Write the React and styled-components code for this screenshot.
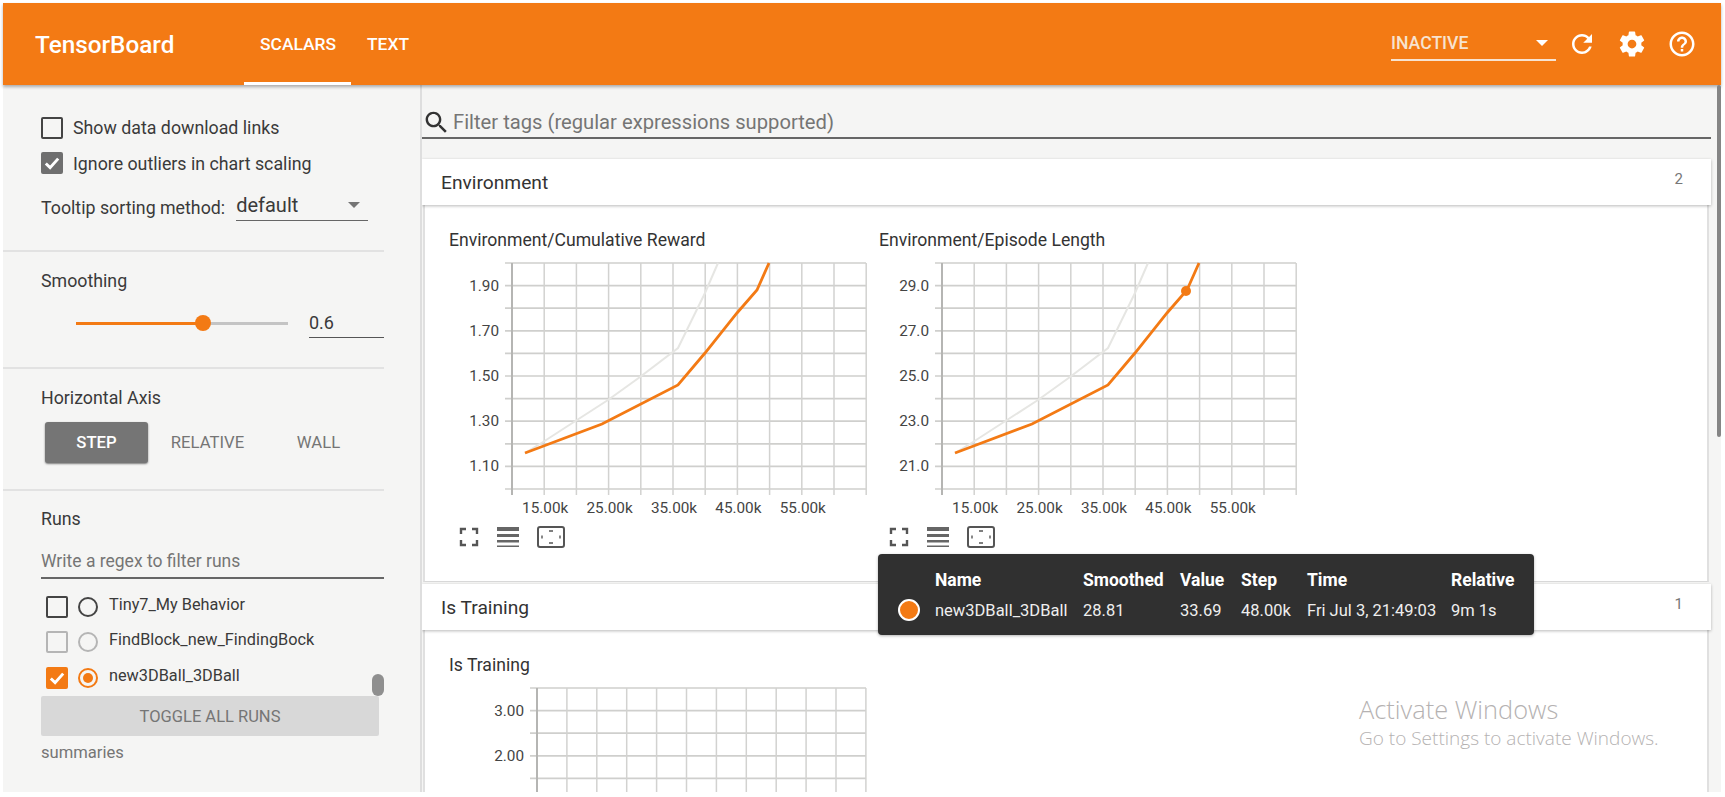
import styled, { createGlobalStyle } from 'styled-components';

const ORANGE = '#f37a14';

const GlobalStyle = createGlobalStyle`
html, body {
  margin: 0;
  padding: 0;
  background: #fff;
}
* {
  box-sizing: border-box;
}
`;

const Page = styled.div`
position: relative;
width: 1725px;
height: 797px;
padding: 3px 4px 5px 3px;
display: flex;
flex-direction: column;
overflow: hidden;
background: #fff;
font-family: Roboto, "Liberation Sans", sans-serif;
font-size: 17.8px;
color: #3a3a3a;
`;

const Header = styled.header`
position: relative;
z-index: 2;
flex: none;
height: 82px;
display: flex;
align-items: center;
background: ${ORANGE};
color: #fff;
box-shadow: 0 2px 3px rgba(0, 0, 0, 0.3);
`;

const Brand = styled.div`
width: 241px;
padding-left: 32px;
font-size: 24.3px;
font-weight: 500;
`;

const Tab = styled.div`
height: 100%;
padding: 3px 15px 0 16px;
display: flex;
align-items: center;
font-size: 17.4px;
font-weight: 500;
border-bottom: 3px solid ${(p) => (p.$active ? '#fff' : 'transparent')};
`;

const RunSelect = styled.div`
margin-left: auto;
width: 165px;
height: 34px;
display: flex;
align-items: center;
justify-content: space-between;
padding-right: 8px;
font-size: 17.6px;
font-weight: 500;
color: #f7e3d0;
border-bottom: 2px solid #f7e3d0;
`;

const Caret = styled.span`
width: 0;
height: 0;
border-left: 6px solid transparent;
border-right: 6px solid transparent;
border-top: 6px solid ${(p) => p.$color || '#757575'};
`;

const IconCell = styled.div`
width: 50px;
display: flex;
justify-content: center;
svg {
  display: block;
  fill: #fff;
}
`;

const HeaderIcons = styled.div`
display: flex;
margin-left: 1px;
padding-right: 14px;
`;

const Content = styled.div`
flex: 1;
min-height: 0;
display: flex;
background: #f5f5f4;
`;

const Sidebar = styled.aside`
flex: none;
width: 419px;
padding-top: 5px;
border-right: 2px solid #dedede;
`;

const Section = styled.section`
margin-right: 36px;
padding: ${(p) => p.$top || 17}px 0 0 38px;
height: ${(p) => p.$height}px;
border-bottom: ${(p) => (p.$last ? 'none' : '2px solid #e2e2e2')};
`;

const Label = styled.div`
height: 22px;
line-height: 22px;
`;

const CheckRow = styled.label`
height: 35.5px;
display: flex;
align-items: center;
gap: 10px;
`;

const Box = styled.span`
flex: none;
width: 22px;
height: 22px;
display: flex;
align-items: center;
justify-content: center;
border-radius: 2px;
border: 2px solid ${(p) => p.$color};
background: ${(p) => (p.$checked ? p.$color : 'transparent')};
svg {
  display: block;
  fill: none;
  stroke: #fff;
  stroke-width: 2.6;
}
`;

const SortRow = styled.div`
margin-top: 8px;
height: 36px;
display: flex;
align-items: center;
gap: 11px;
`;

const SortSelect = styled.div`
width: 132px;
height: 32px;
margin-top: -4px;
display: flex;
align-items: center;
justify-content: space-between;
padding-right: 8px;
font-size: 20px;
border-bottom: 1px solid #666;
`;

const SliderRow = styled.div`
margin-top: 8px;
height: 46px;
display: flex;
align-items: center;
padding-left: 35px;
`;

const SliderTrack = styled.div`
position: relative;
width: 212px;
height: 3px;
background: #c4c4c4;
`;

const SliderFill = styled.div`
height: 100%;
background: ${ORANGE};
`;

const SliderThumb = styled.span`
position: absolute;
top: -6.5px;
width: 16px;
height: 16px;
margin-left: -8px;
border-radius: 50%;
background: ${ORANGE};
`;

const SmoothValue = styled.div`
width: 75px;
height: 30px;
margin-left: 21px;
line-height: 29px;
font-size: 18px;
border-bottom: 1px solid #555;
`;

const AxisButtons = styled.div`
margin: 13px 0 0 4px;
display: flex;
gap: 8px;
`;

const AxisButton = styled.div`
width: 103px;
height: 41px;
display: flex;
align-items: center;
justify-content: center;
border-radius: 3px;
font-size: 16.7px;
font-weight: ${(p) => (p.$active ? 500 : 400)};
color: ${(p) => (p.$active ? '#fff' : '#757575')};
background: ${(p) => (p.$active ? '#757575' : 'transparent')};
box-shadow: ${(p) => (p.$active ? '0 1px 2px rgba(0,0,0,.5)' : 'none')};
`;

const RegexInput = styled.div`
margin-top: 17px;
height: 32px;
line-height: 29px;
font-size: 17.5px;
color: #757575;
border-bottom: 2px solid #666;
`;

const RunList = styled.div`
position: relative;
margin-top: 10px;
height: 107px;
padding-left: 5px;
`;

const RunRow = styled.div`
height: 35.5px;
display: flex;
align-items: center;
font-size: 16.3px;
`;

const RunName = styled.span`
margin-top: -5px;
`;

const Radio = styled.span`
flex: none;
width: 20px;
height: 20px;
margin: 0 11px 0 10px;
display: flex;
align-items: center;
justify-content: center;
border-radius: 50%;
border: 2px solid ${(p) => p.$color};
&::after {
  content: '';
  display: ${(p) => (p.$checked ? 'block' : 'none')};
  width: 10px;
  height: 10px;
  border-radius: 50%;
  background: ${(p) => p.$color};
}
`;

const RunScrollThumb = styled.span`
position: absolute;
right: 0;
bottom: 0;
width: 12px;
height: 22px;
border-radius: 6px;
background: #8f8f8f;
`;

const ToggleButton = styled.div`
width: 338px;
height: 40px;
display: flex;
align-items: center;
justify-content: center;
border-radius: 2px;
background: #d8d8d8;
font-size: 16.5px;
color: #757575;
`;

const Summaries = styled.div`
margin-top: 7px;
height: 20px;
line-height: 20px;
font-size: 16.6px;
color: #757575;
`;

const Main = styled.main`
flex: 1;
min-width: 0;
padding: 5px 10px 0 0;
overflow: hidden;
`;

const SearchBar = styled.div`
height: 49px;
display: flex;
align-items: flex-end;
gap: 2px;
font-size: 20.2px;
line-height: 29px;
color: #757575;
border-bottom: 2px solid #666;
svg {
  display: block;
  fill: #333;
}
`;

const CardHeader = styled.div`
position: relative;
z-index: 1;
height: ${(p) => p.$height}px;
margin-top: ${(p) => p.$gap}px;
padding: 0 28px 0 19px;
display: flex;
align-items: center;
justify-content: space-between;
font-size: 19.2px;
color: #333;
background: #fff;
box-shadow: 0 1px 3px rgba(0, 0, 0, 0.28);
`;

const Count = styled.span`
font-size: 15px;
color: #777;
margin-top: -6px;
`;

const CardBody = styled.div`
height: ${(p) => p.$height}px;
margin: 0 2px 0 1px;
padding: 24px 0 0 24px;
display: flex;
background: #fff;
border-left: 2px solid #e0e0e0;
border-right: 2px solid #e0e0e0;
border-bottom: ${(p) => (p.$open ? 'none' : '1px solid #d8d8d8')};
overflow: hidden;
`;

const ChartCard = styled.div`
flex: none;
width: 430px;
`;

const ChartTitle = styled.div`
height: 22px;
line-height: 22px;
font-size: 17.6px;
color: #333;
`;

const ChartSvg = styled.svg`
display: block;
margin-top: 4px;
font-family: Roboto, "Liberation Sans", sans-serif;
font-size: 15.3px;
fill: #444;
`;

const ChartTools = styled.div`
margin-top: 6px;
padding-left: 10px;
height: 22px;
display: flex;
gap: 18px;
svg {
  display: block;
}
`;

const Tooltip = styled.div`
position: absolute;
z-index: 3;
left: 878px;
top: 554px;
width: 656px;
height: 81px;
padding-top: 11px;
display: grid;
grid-template-columns: 57px 148px 97px 61px 66px 144px auto;
grid-auto-rows: 30px;
align-items: center;
border-radius: 4px;
background: #303030;
color: #eee;
font-size: 16.5px;
box-shadow: 0 1px 3px rgba(0, 0, 0, 0.3);
`;

const TipHead = styled.div`
font-size: 17.5px;
font-weight: 700;
color: #fff;
`;

const TipDot = styled.span`
display: block;
width: 22px;
height: 22px;
margin-left: 20px;
border-radius: 50%;
border: 2px solid #fff;
background: ${ORANGE};
`;

const ScrollBar = styled.div`
position: absolute;
z-index: 3;
left: 1717px;
top: 85px;
width: 4px;
height: 352px;
border-radius: 2px;
background: #858585;
`;

const Watermark = styled.div`
position: absolute;
z-index: 3;
left: 1359px;
top: 693px;
font-family: "Open Sans", sans-serif;
font-weight: 300;
color: #b5b2b2;
`;

const WatermarkTitle = styled.div`
font-size: 25.4px;
line-height: 33px;
`;

const WatermarkText = styled.div`
font-size: 19px;
line-height: 24px;
`;

const Icon = ({ d, size }) => (
  <svg width={size} height={size} viewBox="0 0 24 24"><path d={d} /></svg>
);

const ICONS = {
  refresh: 'M17.65 6.35C16.2 4.9 14.21 4 12 4c-4.42 0-7.99 3.58-7.99 8s3.57 8 7.99 8c3.73 0 6.84-2.55 7.73-6h-2.08c-.82 2.33-3.04 4-5.65 4-3.31 0-6-2.69-6-6s2.69-6 6-6c1.66 0 3.14.69 4.22 1.78L13 11h7V4l-2.35 2.35z',
  settings: 'M19.43 12.98c.04-.32.07-.64.07-.98s-.03-.66-.07-.98l2.11-1.65c.19-.15.24-.42.12-.64l-2-3.46c-.12-.22-.39-.3-.61-.22l-2.49 1c-.52-.4-1.08-.73-1.69-.98l-.38-2.65C14.46 2.18 14.25 2 14 2h-4c-.25 0-.46.18-.49.42l-.38 2.65c-.61.25-1.17.59-1.69.98l-2.49-1c-.23-.09-.49 0-.61.22l-2 3.46c-.13.22-.07.49.12.64l2.11 1.65c-.04.32-.07.65-.07.98s.03.66.07.98l-2.11 1.65c-.19.15-.24.42-.12.64l2 3.46c.12.22.39.3.61.22l2.49-1c.52.4 1.08.73 1.69.98l.38 2.65c.03.24.24.42.49.42h4c.25 0 .46-.18.49-.42l.38-2.65c.61-.25 1.17-.59 1.69-.98l2.49 1c.23.09.49 0 .61-.22l2-3.46c.12-.22.07-.49-.12-.64l-2.11-1.65zM12 15.5c-1.93 0-3.5-1.57-3.5-3.5s1.57-3.5 3.5-3.5 3.5 1.57 3.5 3.5-1.57 3.5-3.5 3.5z',
  help: 'M11 18h2v-2h-2v2zm1-16C6.48 2 2 6.48 2 12s4.48 10 10 10 10-4.48 10-10S17.52 2 12 2zm0 18c-4.41 0-8-3.59-8-8s3.59-8 8-8 8 3.59 8 8-3.59 8-8 8zm0-14c-2.21 0-4 1.79-4 4h2c0-1.1.9-2 2-2s2 .9 2 2c0 2-3 1.75-3 5h2c0-2.25 3-2.5 3-5 0-2.21-1.79-4-4-4z',
  search: 'M15.5 14h-.79l-.28-.27C15.41 12.59 16 11.11 16 9.5 16 5.91 13.09 3 9.5 3S3 5.91 3 9.5 5.91 16 9.5 16c1.61 0 3.09-.59 4.23-1.57l.27.28v.79l5 4.99L20.49 19l-4.99-5zm-6 0C7.01 14 5 11.99 5 9.5S7.01 5 9.5 5 14 7.01 14 9.5 11.99 14 9.5 14z',
};

const CheckMark = ({ size = 18 }) => (
  <svg width={size} height={size} viewBox="0 0 16 16"><path d="M2.5 8.5l3.8 3.6 7.2-8" /></svg>
);

const SMOOTHED = '76,198 153,169 229,130 256,98 288,58 308,35 320,8';
const RAW = '76,198 94,187 128,165 159,145 191,122 229,93 256,38 269,8';
const X_LABELS = ['15.00k', '25.00k', '35.00k', '45.00k', '55.00k'];

const Plot = ({ axisX, step, yLabels, xLabels, height, curves, dot }) => {
  const columns = Array.from({ length: 12 }, (_, i) => axisX + i * step);
  const rows = Array.from({ length: 11 }, (_, i) => 8 + i * 22.6).filter((y) => y < 236);
  return (
    <ChartSvg width="425" height={height}>
      {rows.map((y) => (
        <line key={y} x1={axisX - 7} x2={417} y1={y} y2={y} stroke="#cfcfcd" strokeWidth="1.7" />
      ))}
      {columns.map((x, i) => (
        <line key={x} x1={x} x2={x} y1={8} y2={240} stroke={i === 0 ? '#b5b5b3' : '#d2d2d0'} strokeWidth={i === 0 ? 2 : 1.5} />
      ))}
      {yLabels.map((label, i) => (
        <text key={label} x={axisX - 13} y={rows[i * 2 + 1] + 5} textAnchor="end">{label}</text>
      ))}
      {xLabels && xLabels.map((label, i) => (
        <text key={label} x={columns[i * 2 + 1] + 1} y={258} textAnchor="middle">{label}</text>
      ))}
      {curves && <polyline points={RAW} fill="none" stroke="#e6e6e3" strokeWidth="2" />}
      {curves && <polyline points={SMOOTHED} fill="none" stroke={ORANGE} strokeWidth="2.8" />}
      {dot && <circle cx="307" cy="36" r="5" fill={ORANGE} />}
    </ChartSvg>
  );
};

const ToolIcons = () => (
  <ChartTools>
    <svg width="20" height="22" fill="none" stroke="#555" strokeWidth="2.4">
      <path d="M2 8V3h5M13 3h5v5M18 14v5h-5M7 19H2v-5" />
    </svg>
    <svg width="22" height="22" fill="#666">
      <rect y="1" width="22" height="4" />
      <rect y="8" width="22" height="3" />
      <rect y="14" width="22" height="2.5" />
      <rect y="19.5" width="22" height="1.5" />
    </svg>
    <svg width="28" height="22" fill="none" stroke="#555">
      <rect x="1" y="1" width="26" height="20" rx="2" strokeWidth="2" />
      <path d="M12 5h4M12 17h4M5 9.5v3M23 9.5v3" strokeWidth="1.4" />
    </svg>
  </ChartTools>
);

const RUNS = [
  { name: 'Tiny7_My Behavior', color: '#444' },
  { name: 'FindBlock_new_FindingBock', color: '#b5b5b5' },
  { name: 'new3DBall_3DBall', color: ORANGE, checked: true },
];

const TIP_HEADS = ['Name', 'Smoothed', 'Value', 'Step', 'Time', 'Relative'];
const TIP_VALUES = ['new3DBall_3DBall', '28.81', '33.69', '48.00k', 'Fri Jul 3, 21:49:03', '9m 1s'];

export default function App() {
  return (
    <Page>
      <GlobalStyle />
      <Header>
        <Brand>TensorBoard</Brand>
        <Tab $active>SCALARS</Tab>
        <Tab>TEXT</Tab>
        <RunSelect>INACTIVE<Caret $color="#fff" /></RunSelect>
        <HeaderIcons>
          <IconCell><Icon d={ICONS.refresh} size={30} /></IconCell>
          <IconCell><Icon d={ICONS.settings} size={30} /></IconCell>
          <IconCell><Icon d={ICONS.help} size={30} /></IconCell>
        </HeaderIcons>
      </Header>

      <Content>
        <Sidebar>
          <Section $top={20} $height={162}>
            <CheckRow><Box $color="#444" />Show data download links</CheckRow>
            <CheckRow><Box $color="#6f6f6f" $checked><CheckMark /></Box>Ignore outliers in chart scaling</CheckRow>
            <SortRow>
              Tooltip sorting method:
              <SortSelect>default<Caret /></SortSelect>
            </SortRow>
          </Section>
          <Section $top={18} $height={117}>
            <Label>Smoothing</Label>
            <SliderRow>
              <SliderTrack>
                <SliderFill style={{ width: '60%' }} />
                <SliderThumb style={{ left: '60%' }} />
              </SliderTrack>
              <SmoothValue>0.6</SmoothValue>
            </SliderRow>
          </Section>
          <Section $top={18} $height={122}>
            <Label>Horizontal Axis</Label>
            <AxisButtons>
              <AxisButton $active>STEP</AxisButton>
              <AxisButton>RELATIVE</AxisButton>
              <AxisButton>WALL</AxisButton>
            </AxisButtons>
          </Section>
          <Section $last $height={300}>
            <Label>Runs</Label>
            <RegexInput>Write a regex to filter runs</RegexInput>
            <RunList>
              {RUNS.map((run) => (
                <RunRow key={run.name}>
                  <Box $color={run.color} $checked={run.checked}>{run.checked && <CheckMark />}</Box>
                  <Radio $color={run.color} $checked={run.checked} />
                  <RunName>{run.name}</RunName>
                </RunRow>
              ))}
              <RunScrollThumb />
            </RunList>
            <ToggleButton>TOGGLE ALL RUNS</ToggleButton>
            <Summaries>summaries</Summaries>
          </Section>
        </Sidebar>

        <Main>
          <SearchBar>
            <Icon d={ICONS.search} size={29} />
            Filter tags (regular expressions supported)
          </SearchBar>

          <CardHeader $height={46} $gap={20}>Environment<Count>2</Count></CardHeader>
          <CardBody $height={377}>
            <ChartCard>
              <ChartTitle>Environment/Cumulative Reward</ChartTitle>
              <Plot axisX={63} step={32.2} height={265} curves xLabels={X_LABELS} yLabels={['1.90', '1.70', '1.50', '1.30', '1.10']} />
              <ToolIcons />
            </ChartCard>
            <ChartCard>
              <ChartTitle>Environment/Episode Length</ChartTitle>
              <Plot axisX={63} step={32.2} height={265} curves dot xLabels={X_LABELS} yLabels={['29.0', '27.0', '25.0', '23.0', '21.0']} />
              <ToolIcons />
            </ChartCard>
          </CardBody>

          <CardHeader $height={46} $gap={2}>Is Training<Count>1</Count></CardHeader>
          <CardBody $height={170} $open>
            <ChartCard>
              <ChartTitle>Is Training</ChartTitle>
              <Plot axisX={88} step={29.9} height={140} yLabels={['3.00', '2.00']} />
            </ChartCard>
          </CardBody>
        </Main>
      </Content>

      <Tooltip>
        <span />
        {TIP_HEADS.map((head) => <TipHead key={head}>{head}</TipHead>)}
        <TipDot />
        {TIP_VALUES.map((value) => <div key={value}>{value}</div>)}
      </Tooltip>

      <ScrollBar />

      <Watermark>
        <WatermarkTitle>Activate Windows</WatermarkTitle>
        <WatermarkText>Go to Settings to activate Windows.</WatermarkText>
      </Watermark>
    </Page>
  );
}
